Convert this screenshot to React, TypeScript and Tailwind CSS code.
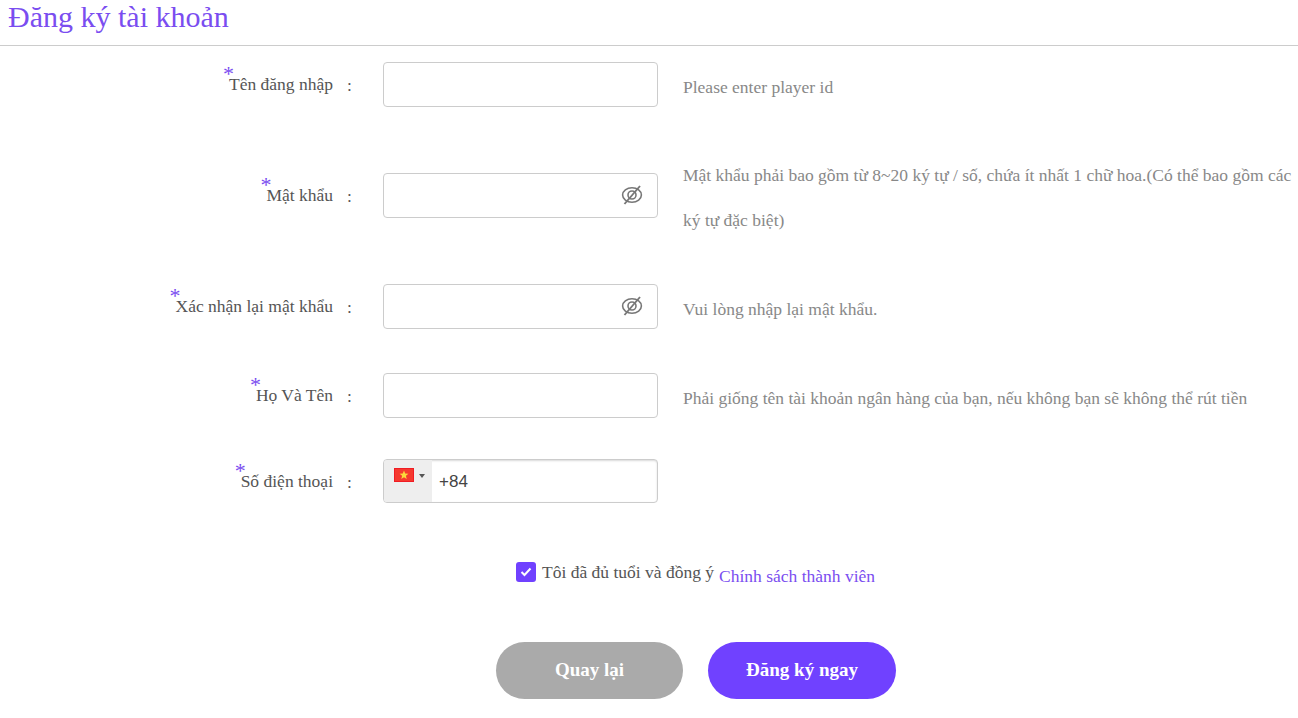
const serif = { fontFamily: '"Liberation Serif", "Times New Roman", serif' };

function EyeOff() {
  return (
    <svg width="22" height="20" viewBox="0 0 22 20" fill="none" stroke="#777" strokeWidth="1.6" className="absolute right-[15px] top-[12px]">
      <ellipse cx="11" cy="10" rx="9.4" ry="7.2" />
      <circle cx="11" cy="10" r="4" />
      <path d="M3.5 19L19 1" strokeWidth="1.9" />
    </svg>
  );
}

function VnFlag() {
  return (
    <svg width="20" height="14" viewBox="0 0 20 14">
      <rect width="20" height="14" fill="#f01c24" />
      <rect x="1" y="1" width="18" height="12" fill="#f5392f" />
      <path d="M10 2.6l1.2 3 3.2.2-2.5 2 .8 3.1L10 9.2l-2.7 1.7.8-3.1-2.5-2 3.2-.2z" fill="#fbd83a" />
    </svg>
  );
}

function Row({ label, hint, eye, className }: { label: string; hint?: string; eye?: boolean; className: string }) {
  return (
    <div className={`flex h-[45px] items-center ${className}`}>
      <Label text={label} />
      <div className="relative h-[45px] w-[275px] shrink-0">
        <input type="text" className="h-full w-full rounded-[4px] border border-[#ccc] bg-white px-3 outline-none" />
        {eye && <EyeOff />}
      </div>
      {hint && <p className="mt-[5px] ml-[25px] flex-1 text-[17.5px] leading-[45px] text-[#888]">{hint}</p>}
    </div>
  );
}

function Label({ text }: { text: string }) {
  return (
    <div className="flex w-[383px] shrink-0 text-[17.5px] leading-[20px] text-[#555]">
      <div className="flex-1 text-right">
        <span className="relative">
          <span className="absolute top-[-10px] left-[-6px] text-[22px] leading-[20px] text-[#7a4df0]">*</span>
          {text}
        </span>
      </div>
      <span className="ml-[14px] mt-[1px] w-[36px]">:</span>
    </div>
  );
}

export default function App() {
  return (
    <div className="min-h-[718px] bg-white" style={serif}>
      <h1 className="h-[46px] border-b border-[#ccc] pl-2 text-[30px] leading-[33px] font-normal text-[#7a4df0]">
        Đăng ký tài khoản
      </h1>
      <Row className="mt-4" label="Tên đăng nhập" hint="Please enter player id" />
      <Row
        className="mt-[66px]"
        label="Mật khẩu"
        eye
        hint="Mật khẩu phải bao gồm từ 8~20 ký tự / số, chứa ít nhất 1 chữ hoa.(Có thể bao gồm các ký tự đặc biệt)"
      />
      <Row className="mt-[66px]" label="Xác nhận lại mật khẩu" eye hint="Vui lòng nhập lại mật khẩu." />
      <Row className="mt-[44px]" label="Họ Và Tên" hint="Phải giống tên tài khoản ngân hàng của bạn, nếu không bạn sẽ không thể rút tiền" />
      <div className="mt-[41px] flex h-[44px] items-center">
        <Label text="Số điện thoại" />
        <div className="flex h-[44px] w-[275px] overflow-hidden rounded-[4px] border border-[#ccc] shadow-[inset_0_1px_2px_rgba(0,0,0,0.15)]">
          <div className="flex w-[48px] shrink-0 items-start bg-[#eee] pt-2 pl-[10px]">
            <VnFlag />
            <span className="mt-[6px] ml-[5px] h-0 w-0 border-x-[3px] border-t-[4px] border-x-transparent border-t-[#555]" />
          </div>
          <input
            type="text"
            defaultValue="+84"
            className="w-full min-w-0 bg-transparent pt-[2px] pl-[7px] text-[17px] text-[#444] outline-none"
            style={{ fontFamily: '"Liberation Sans", Arial, sans-serif' }}
          />
        </div>
      </div>
      <div className="mt-[59px] ml-[516px] flex h-5 items-center text-[17.5px]">
        <span className="flex h-5 w-5 shrink-0 items-center justify-center rounded-[3px] bg-[#7041ff]">
          <svg width="12" height="10" viewBox="0 0 12 10" fill="none" stroke="#fff" strokeWidth="2">
            <path d="M1.5 5l3 3 6-6.5" />
          </svg>
        </span>
        <span className="ml-[6px] text-[#555]">Tôi đã đủ tuổi và đồng ý</span>
        <a className="mt-2 ml-[5px] text-[#7a4df0]">Chính sách thành viên</a>
      </div>
      <div className="mt-[60px] ml-[496px] flex gap-[25px] pb-[19px]">
        <button type="button" className="h-[57px] w-[187px] rounded-full bg-[#aaa] text-[19px] font-bold text-white">
          Quay lại
        </button>
        <button type="button" className="h-[57px] w-[188px] rounded-full bg-[#7041ff] text-[19px] font-bold text-white">
          Đăng ký ngay
        </button>
      </div>
    </div>
  );
}
